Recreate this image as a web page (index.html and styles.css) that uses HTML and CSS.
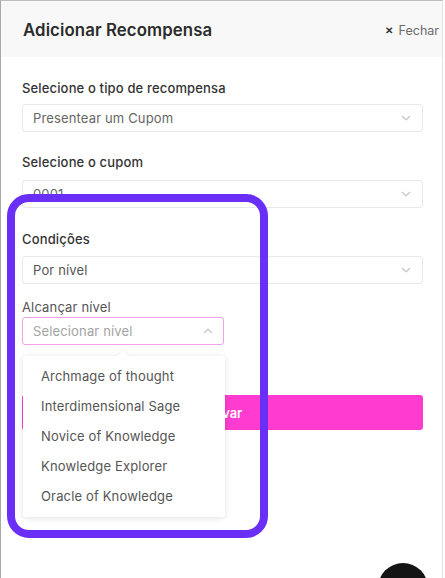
FILE: index.html
```html
<!DOCTYPE html>
<html lang="pt">
<head>
<meta charset="utf-8">
<link rel="stylesheet" href="styles.css">
</head>
<body>
<div class="modal">
  <div class="header">
    <h1 class="title">Adicionar Recompensa</h1>
    <button class="close"><span class="x">✕</span>Fechar</button>
  </div>
  <div class="content">
    <label class="label l1">Selecione o tipo de recompensa</label>
    <div class="select">
      <span class="value">Presentear um Cupom</span>
      <svg class="chev" width="10" height="6" viewBox="0 0 10 6"><path d="M1 1l4 4 4-4" fill="none" stroke="#c4c4c4" stroke-width="1.2"/></svg>
    </div>
    <label class="label l2">Selecione o cupom</label>
    <div class="select">
      <span class="value">0001</span>
      <svg class="chev" width="10" height="6" viewBox="0 0 10 6"><path d="M1 1l4 4 4-4" fill="none" stroke="#c4c4c4" stroke-width="1.2"/></svg>
    </div>
    <label class="label l3">Condições</label>
    <div class="select">
      <span class="value dark">Por nível</span>
      <svg class="chev" width="10" height="6" viewBox="0 0 10 6"><path d="M1 1l4 4 4-4" fill="none" stroke="#c4c4c4" stroke-width="1.2"/></svg>
    </div>
    <label class="label l4">Alcançar nível</label>
    <div class="level-wrap">
      <div class="select open">
        <span class="value placeholder">Selecionar nível</span>
        <svg class="chev" width="10" height="6" viewBox="0 0 10 6"><path d="M1 5l4-4 4 4" fill="none" stroke="#c4c4c4" stroke-width="1.2"/></svg>
      </div>
      <ul class="dropdown">
        <li>Archmage of thought</li>
        <li>Interdimensional Sage</li>
        <li>Novice of Knowledge</li>
        <li>Knowledge Explorer</li>
        <li>Oracle of Knowledge</li>
      </ul>
    </div>
    <button class="save">Salvar</button>
  </div>
  <div class="highlight"></div>
  <div class="chat"></div>
</div>
</body>
</html>
```

FILE: styles.css
```css
* { box-sizing: border-box; }
html, body { margin: 0; padding: 0; background: #fff; }
body {
  font-family: Inter, "Noto Sans", sans-serif;
  color: #333;
  overflow: hidden;
}
.modal {
  position: relative;
  width: 443px;
  height: 578px;
  overflow: hidden;
  border-left: 1px solid #a9a9a9;
  border-top: 1px solid #bdbdbd;
  border-right: 1px solid #e2e2e2;
  background: #fff;
}
.header {
  height: 56px;
  background: #f8f8f8;
  display: flex;
  align-items: center;
  justify-content: space-between;
  padding: 0 3px 0 22px;
}
.title {
  margin: 0;
  font-size: 16.8px;
  font-weight: 600;
  color: #2b2b2b;
  letter-spacing: 0.1px;
  padding-top: 2px;
}
.close {
  border: 0;
  background: none;
  padding: 2px 0 0;
  font-family: inherit;
  font-size: 12.5px;
  color: #6a6a6a;
  display: flex;
  align-items: center;
  gap: 6px;
}
.close .x {
  font-weight: 700;
  color: #333;
  font-size: 10px;
}
.content {
  padding: 0 19px 0 21px;
  display: flex;
  flex-direction: column;
}
.label {
  display: block;
  font-size: 13px;
  font-weight: 500;
  line-height: 20px;
  color: #333;
  letter-spacing: 0.15px;
}
.l1 { margin-top: 21px; margin-bottom: 6px; }
.l2 { margin-top: 20px; margin-bottom: 8px; }
.l3 { margin-top: 21px; margin-bottom: 7px; }
.l4 { margin-top: 13px; font-weight: 400; color: #555; }
.select {
  height: 28px;
  border: 1px solid #e9e9e9;
  border-radius: 3px;
  display: flex;
  align-items: center;
  justify-content: space-between;
  padding: 0 11px 0 10px;
  background: #fff;
}
.value {
  font-size: 13px;
  color: #666;
  letter-spacing: 0.15px;
}
.value.dark { color: #555; }
.value.placeholder { color: #a3a3a3; }
.level-wrap {
  position: relative;
  width: 202px;
}
.select.open {
  border-color: #f2a2e6;
  padding-right: 10px;
}
.dropdown {
  position: absolute;
  top: 39px;
  left: 1px;
  width: 202px;
  margin: 0;
  padding: 5px 0 6px;
  list-style: none;
  background: #fff;
  border-radius: 3px;
  box-shadow: 0 1px 6px rgba(0, 0, 0, 0.12);
  z-index: 2;
}
.dropdown::before {
  content: "";
  position: absolute;
  top: -4px;
  left: 96px;
  width: 8px;
  height: 8px;
  background: #fff;
  transform: rotate(45deg);
  box-shadow: -1px -1px 2px rgba(0, 0, 0, 0.05);
}
.dropdown li {
  height: 30px;
  line-height: 30px;
  padding-left: 18px;
  font-size: 13px;
  letter-spacing: 0.15px;
  color: #555;
  position: relative;
}
.save {
  margin-top: 50px;
  height: 35px;
  border: 0;
  border-radius: 3px;
  background: #ff3ccf;
  color: #fff;
  font-family: inherit;
  font-weight: 600;
  font-size: 13px;
}
.highlight {
  position: absolute;
  left: 6px;
  top: 193px;
  width: 261px;
  height: 344px;
  border: 8px solid #6a2ff6;
  border-radius: 22px;
  z-index: 3;
}
.chat {
  position: absolute;
  left: 377px;
  top: 562px;
  width: 50px;
  height: 50px;
  border-radius: 50%;
  background: #141414;
}
```
